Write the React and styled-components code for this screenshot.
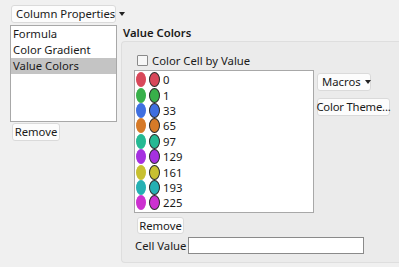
import React from "react";
import styled, { createGlobalStyle } from "styled-components";

const Global = createGlobalStyle`
  html, body { margin: 0; padding: 0; background: #f0f0f0; }
  body { font-family: "Noto Sans", "Segoe UI", sans-serif; font-size: 11.3px; color: #1a1a1a; }
`;

const Page = styled.div`
  width: 399px;
  height: 267px;
  display: flex;
  overflow: hidden;
  background: #f0f0f0;
`;

const LeftCol = styled.div`
  width: 121px;
  flex: none;
  padding: 5px 0 0 10px;
  box-sizing: border-box;
  display: flex;
  flex-direction: column;
  align-items: flex-start;
`;

const Btn = styled.button`
  font: inherit;
  color: #1a1a1a;
  background: #fcfcfc;
  border: 1px solid #dadada;
  border-radius: 3px;
  height: ${p => p.$h || 18}px;
  width: ${p => (p.$w ? p.$w + "px" : "auto")};
  padding: 0 ${p => (p.$tight ? 1 : 4)}px;
  display: inline-flex;
  align-items: center;
  justify-content: ${p => (p.$caret ? "space-between" : "center")};
  gap: 4px;
  line-height: 1;
  white-space: nowrap;
  box-sizing: border-box;
  letter-spacing: ${p => (p.$tight ? "-0.2px" : "0")};
`;

const Caret = styled.span`
  width: 0;
  height: 0;
  border-left: 3.5px solid transparent;
  border-right: 3.5px solid transparent;
  border-top: 4px solid #222;
`;

const ListBox = styled.div`
  width: 107px;
  height: 97px;
  margin-top: 2px;
  background: #fff;
  border: 1px solid #a8a8a8;
  box-sizing: border-box;
`;

const ListItem = styled.div`
  height: 16px;
  line-height: 16px;
  padding-left: 2px;
  background: ${p => (p.$sel ? "#c4c4c4" : "transparent")};
`;

const LeftRemove = styled(Btn)`
  margin-top: 1px;
  margin-left: 2px;
`;

const RightCol = styled.div`
  flex: 1;
  display: flex;
  flex-direction: column;
  padding-top: 25px;
`;

const Title = styled.div`
  font-weight: 600;
  height: 16px;
  line-height: 16px;
  padding-left: 2px;
`;

const Group = styled.div`
  height: 222px;
  background: #ebebeb;
  border: 1px solid #dedede;
  border-right: none;
  border-radius: 4px 0 0 4px;
  padding: 12px 0 0 12px;
  box-sizing: border-box;
  display: flex;
  flex-direction: column;
`;

const CheckRow = styled.label`
  display: flex;
  align-items: center;
  gap: 4px;
  height: 12px;
  margin-left: 3px;
`;

const Box = styled.span`
  width: 9px;
  height: 9px;
  border: 1px solid #8a8a8a;
  background: #f7f7f7;
  border-radius: 1px;
`;

const MidRow = styled.div`
  display: flex;
  gap: 3px;
  margin-top: 4px;
`;

const ValueList = styled.div`
  width: 180px;
  height: 143px;
  background: #fff;
  border: 1px solid #a8a8a8;
  box-sizing: border-box;
  padding-top: 1px;
`;

const ValueRow = styled.div`
  height: 15.4px;
  display: flex;
  align-items: center;
  padding-left: 1px;
`;

const Dot = styled.span`
  width: ${p => (p.$outlined ? 11 : 10)}px;
  height: 15px;
  border-radius: 50%;
  background: ${p => p.$c};
  box-sizing: border-box;
  border: ${p => (p.$outlined ? "1.5px solid #2a2a2a" : "none")};
  margin-right: 3px;
`;

const SideButtons = styled.div`
  display: flex;
  flex-direction: column;
  align-items: flex-start;
  gap: 7px;
  padding-top: 3px;
`;

const RightRemove = styled(Btn)`
  align-self: flex-start;
  margin-top: 4px;
  margin-left: 3px;
`;

const BottomRow = styled.div`
  display: flex;
  align-items: center;
  gap: 2px;
  margin-top: 3px;
  padding-left: 1px;
`;

const Input = styled.div`
  width: 176px;
  height: 17px;
  background: #fff;
  border: 1px solid #8a8a8a;
  box-sizing: border-box;
`;

const values = [
  ["0", "#d8485a"],
  ["1", "#38b04a"],
  ["33", "#3f6fe0"],
  ["65", "#d67a28"],
  ["97", "#25b993"],
  ["129", "#a530e0"],
  ["161", "#c8c030"],
  ["193", "#25b0b3"],
  ["225", "#cc30d0"],
];

export default function App() {
  return (
    <Page>
      <Global />
      <LeftCol>
        <Btn $h={18} $w={105} $caret style={{ marginLeft: 1 }}>
          Column Properties <Caret />
        </Btn>
        <ListBox>
          <ListItem>Formula</ListItem>
          <ListItem>Color Gradient</ListItem>
          <ListItem $sel>Value Colors</ListItem>
        </ListBox>
        <LeftRemove $w={48}>Remove</LeftRemove>
      </LeftCol>
      <RightCol>
        <Title>Value Colors</Title>
        <Group>
          <CheckRow>
            <Box /> Color Cell by Value
          </CheckRow>
          <MidRow>
            <ValueList>
              {values.map(([v, c]) => (
                <ValueRow key={v}>
                  <Dot $c={c} />
                  <Dot $c={c} $outlined />
                  {v}
                </ValueRow>
              ))}
            </ValueList>
            <SideButtons>
              <Btn $w={54} $caret>
                Macros <Caret />
              </Btn>
              <Btn $w={73} $tight>Color Theme...</Btn>
            </SideButtons>
          </MidRow>
          <RightRemove $w={47} $h={17}>Remove</RightRemove>
          <BottomRow>
            Cell Value
            <Input />
          </BottomRow>
        </Group>
      </RightCol>
    </Page>
  );
}
